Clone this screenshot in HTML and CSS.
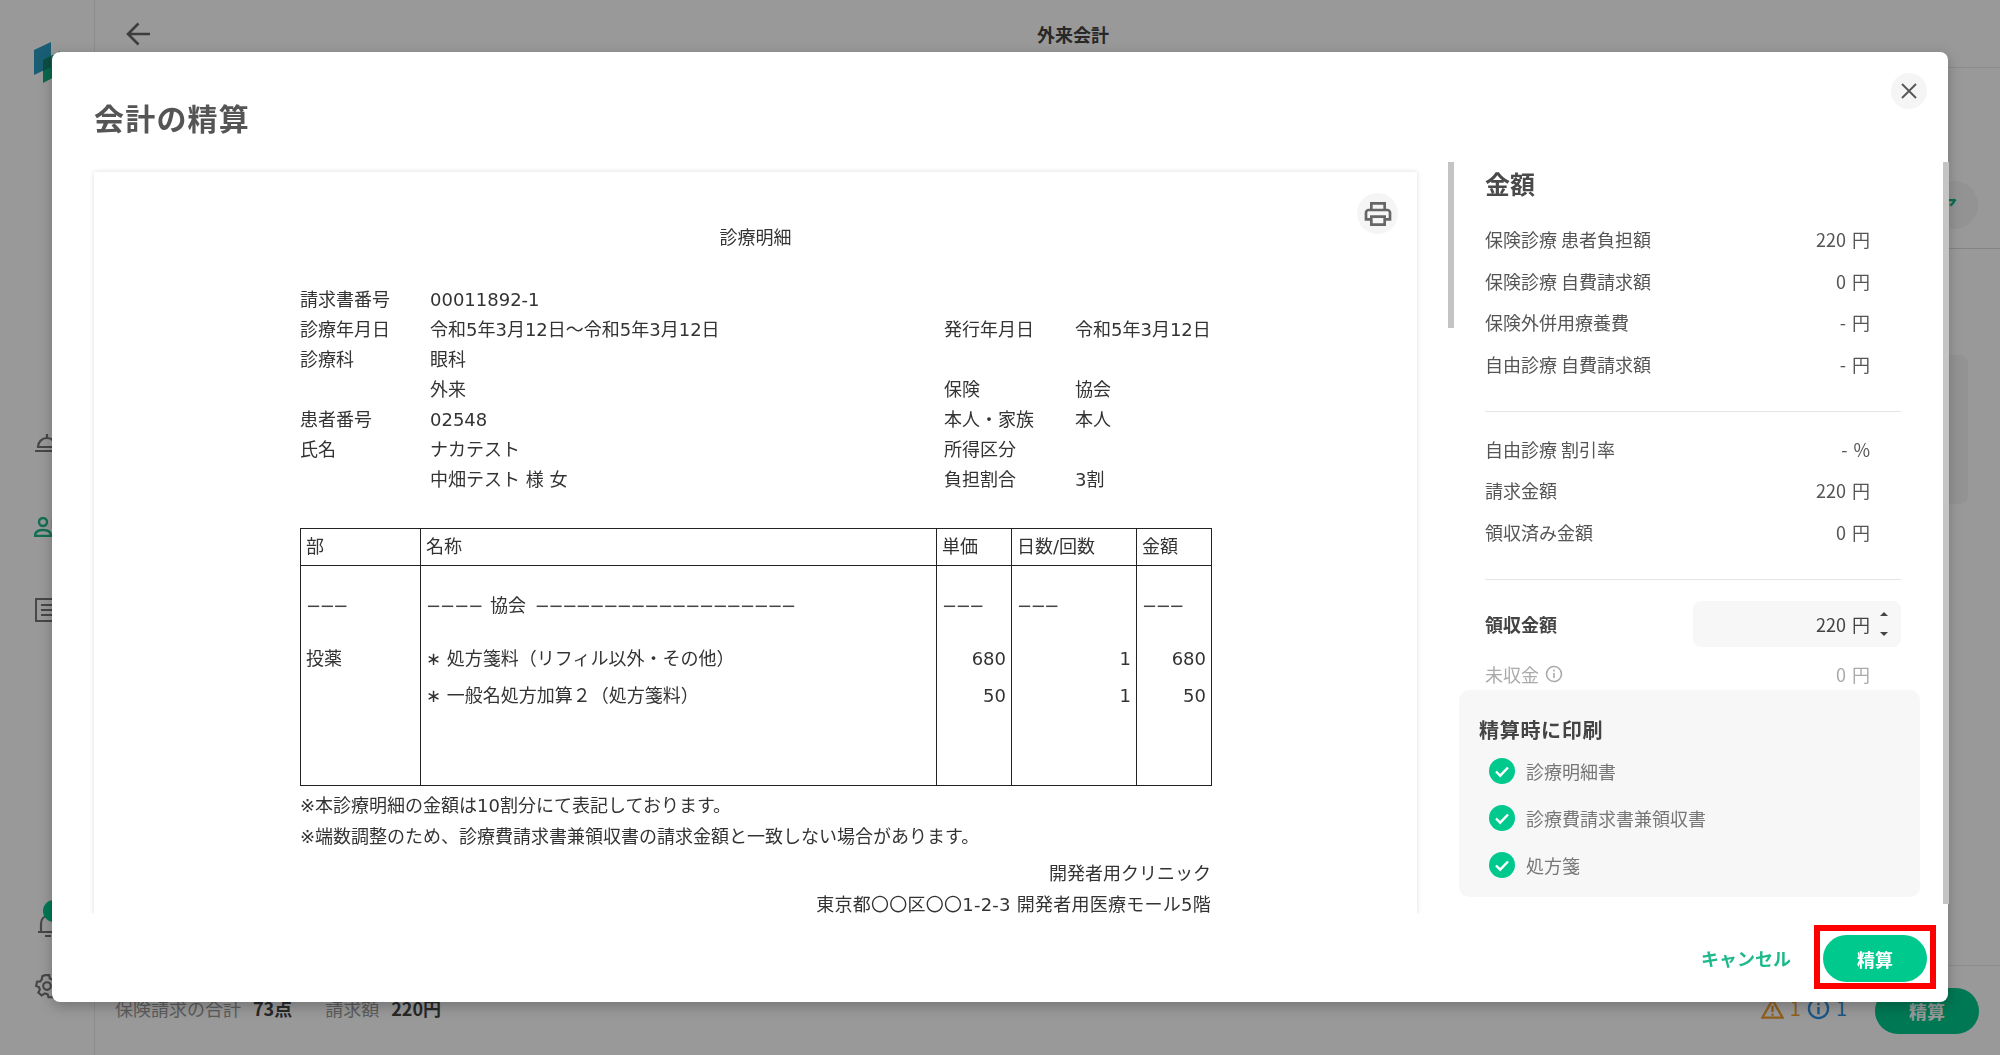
FILE: index.html
```html
<!DOCTYPE html>
<html lang="ja">
<head>
<meta charset="utf-8">
<title>会計の精算</title>
<link rel="stylesheet" href="styles.css">
</head>
<body>
<div class="app">
  <aside class="sidebar">
    <svg class="logo" viewBox="0 0 30 41"><polygon points="0,8 17,0 17,25 0,33" fill="#2a9dc4"/><polygon points="9,18 26,9 26,32 9,41" fill="#12b07f"/><polygon points="9,18 17,14 17,25 9,29" fill="#14826f"/></svg>
    <svg class="nav cloche" viewBox="0 0 26 20" fill="none" stroke="#777" stroke-width="2.2"><path d="M1 18h24M4 14c0-5 4-9 9-9s9 4 9 9zM13 1v4"/></svg>
    <svg class="nav person" viewBox="0 0 26 20" fill="none" stroke="#1fb98a" stroke-width="2.4"><circle cx="9" cy="5" r="4"/><path d="M1 19c0-5 4-6 8-6s8 1 8 6z"/><path d="M19 2v9M23 2v9"/></svg>
    <svg class="nav receipt" viewBox="0 0 26 26" fill="none" stroke="#777" stroke-width="2"><path d="M2 2h24v22H2zM7 8h19M7 13h19M7 18h19"/></svg>
    <div class="side-bottom">
      <div class="bell-wrap">
        <svg class="nav bell" viewBox="0 0 26 24" fill="none" stroke="#777" stroke-width="2.2"><path d="M1 19h20M4 19v-8c0-5 3-8 7-8s7 3 7 8v8M8 23h6"/></svg>
        <span class="bell-badge"></span>
      </div>
      <svg class="nav gear" viewBox="0 0 24 24" fill="none" stroke="#777" stroke-width="2"><circle cx="12" cy="12" r="3.5"/><path d="M10 2h4l.6 3 2.4 1 2.6-1.6 2.6 3.2-2 2.2.4 2.2 2.4 1.4-1 3.8-3 .2-1.4 2-.2 3h-4l-.8-2.8-2.4-.8L7 20.600 4 18l1.400-2.600-.8-2.400L2 12l.8-4 3-.2 1.400-2L7.600 3z"/></svg>
    </div>
  </aside>
  <main class="main">
    <header class="top">
      <svg class="back" viewBox="0 0 25 24" fill="none" stroke="#666" stroke-width="2.600"><path d="M24 12H2M12.500 1.500 2 12l10.500 10.500"/></svg>
      <h2 class="top-title">外来会計</h2>
    </header>
    <div class="subbar">
      <span class="round-tab">ア</span>
    </div>
    <div class="content">
      <div class="side-card"></div>
    </div>
    <footer class="bottom">
      <span class="sum-label">保険請求の合計</span><b class="sum-val">73点</b>
      <span class="sum-label sum-second">請求額</span><b class="sum-val">220円</b>
      <span class="alerts">
        <svg class="alert-icon" viewBox="0 0 24 22" fill="none" stroke="#f0a030" stroke-width="2.400"><path d="M12 2 1.500 20.500h21zM12 8v7M12 16.500v2"/></svg>
        <span class="warn-count">1</span>
        <svg class="alert-icon" viewBox="0 0 24 24" fill="none" stroke="#2f8fdc" stroke-width="2.400"><circle cx="12" cy="12" r="10"/><path d="M12 10.500V18M12 6v2.500"/></svg>
        <span class="info-count">1</span>
      </span>
      <button class="under-btn">精算</button>
    </footer>
  </main>
</div>
<div class="overlay"></div>
<section class="dialog">
  <div class="dlg-head">
    <h1 class="dlg-title">会計の精算</h1>
    <button class="close" aria-label="閉じる"><svg class="close-x" viewBox="0 0 16 16" fill="none" stroke="#555" stroke-width="1.800"><path d="M1 1l14 14M15 1 1 15"/></svg></button>
  </div>
  <div class="dlg-body">
    <article class="card">
      <button class="print" aria-label="印刷"><svg class="print-icon" viewBox="0 0 24 24" fill="#666"><path d="M19 8h-1V3H6v5H5c-1.660 0-3 1.340-3 3v6h4v4h12v-4h4v-6c0-1.660-1.340-3-3-3zM8 5h8v3H8V5zm8 12v2H8v-4h8v2zm2-2v-2H6v2H4v-4c0-.550.450-1 1-1h14c.550 0 1 .450 1 1v4h-2z"/></svg></button>
      <h3 class="doc-title">診療明細</h3>
      <div class="doc-grid">
        <span>請求書番号</span><span>00011892-1</span><span></span><span></span>
        <span>診療年月日</span><span>令和5年3月12日～令和5年3月12日</span><span>発行年月日</span><span>令和5年3月12日</span>
        <span>診療科</span><span>眼科</span><span></span><span></span>
        <span></span><span>外来</span><span>保険</span><span>協会</span>
        <span>患者番号</span><span>02548</span><span>本人・家族</span><span>本人</span>
        <span>氏名</span><span>ナカテスト</span><span>所得区分</span><span></span>
        <span></span><span>中畑テスト 様 女</span><span>負担割合</span><span>3割</span>
      </div>
      <table class="bill">
        <colgroup><col class="c1"><col class="c2"><col class="c3"><col class="c4"><col class="c5"></colgroup>
        <thead><tr><th>部</th><th>名称</th><th>単価</th><th>日数/回数</th><th>金額</th></tr></thead>
        <tbody>
          <tr class="gap-a"><td></td><td></td><td></td><td></td><td></td></tr>
          <tr class="line"><td class="dash">−−−</td><td><span class="dash dash-lead">−−−−</span> 協会 <span class="dash dash-tail">−−−−−−−−−−−−−−−−−−−</span></td><td class="dash">−−−</td><td class="dash">−−−</td><td class="dash">−−−</td></tr>
          <tr class="gap-b"><td></td><td></td><td></td><td></td><td></td></tr>
          <tr class="line"><td>投薬</td><td>∗ 処方箋料（リフィル以外・その他）</td><td class="num">680</td><td class="num">1</td><td class="num">680</td></tr>
          <tr class="line"><td></td><td>∗ 一般名処方加算２（処方箋料）</td><td class="num">50</td><td class="num">1</td><td class="num">50</td></tr>
          <tr class="gap-c"><td></td><td></td><td></td><td></td><td></td></tr>
        </tbody>
      </table>
      <p class="note">※本診療明細の金額は10割分にて表記しております。</p>
      <p class="note note-2">※端数調整のため、診療費請求書兼領収書の請求金額と一致しない場合があります。</p>
      <p class="clinic">開発者用クリニック</p>
      <p class="clinic clinic-2">東京都〇〇区〇〇1-2-3 開発者用医療モール5階</p>
    </article>
    <span class="thumb"></span>
    <div class="amount">
      <div class="amount-in">
        <h3 class="amount-title">金額</h3>
        <div class="row"><span>保険診療 患者負担額</span><span class="val">220 円</span></div>
        <div class="row"><span>保険診療 自費請求額</span><span class="val">0 円</span></div>
        <div class="row"><span>保険外併用療養費</span><span class="val">- 円</span></div>
        <div class="row"><span>自由診療 自費請求額</span><span class="val">- 円</span></div>
        <hr class="rule">
        <div class="row"><span>自由診療 割引率</span><span class="val">- %</span></div>
        <div class="row"><span>請求金額</span><span class="val">220 円</span></div>
        <div class="row"><span>領収済み金額</span><span class="val">0 円</span></div>
        <hr class="rule">
        <div class="pay">
          <span class="pay-label">領収金額</span>
          <div class="pay-input"><span class="pay-val">220 円</span>
            <svg class="spin" viewBox="0 0 10 24" fill="#444"><path d="M5 0 9 4H1zM1 20h8l-4 4z"/></svg>
          </div>
        </div>
        <div class="row row-muted"><span class="muted-label">未収金
          <svg class="info" viewBox="0 0 18 18" fill="none" stroke="#aaa" stroke-width="1.600"><circle cx="9" cy="9" r="7.500"/><path d="M9 8v5M9 4.500v2"/></svg></span><span class="val">0 円</span></div>
        <div class="print-panel">
          <h4 class="print-title">精算時に印刷</h4>
          <div class="check-row"><svg class="check" viewBox="0 0 26 26"><circle cx="13" cy="13" r="13" fill="#00c98d"/><path d="M7 13.500l4.200 4.200L19 9.500" fill="none" stroke="#fff" stroke-width="2.400"/></svg><span>診療明細書</span></div>
          <div class="check-row"><svg class="check" viewBox="0 0 26 26"><circle cx="13" cy="13" r="13" fill="#00c98d"/><path d="M7 13.500l4.200 4.200L19 9.500" fill="none" stroke="#fff" stroke-width="2.400"/></svg><span>診療費請求書兼領収書</span></div>
          <div class="check-row"><svg class="check" viewBox="0 0 26 26"><circle cx="13" cy="13" r="13" fill="#00c98d"/><path d="M7 13.500l4.200 4.200L19 9.500" fill="none" stroke="#fff" stroke-width="2.400"/></svg><span>処方箋</span></div>
        </div>
      </div>
      <span class="track"></span>
    </div>
  </div>
  <div class="dlg-foot">
    <button class="cancel">キャンセル</button>
    <span class="mark"><button class="settle">精算</button></span>
  </div>
</section>
</body>
</html>
```
FILE: styles.css
```css
* { box-sizing: border-box; }
html, body { margin: 0; height: 100%; }
body { font-family: "Noto Sans CJK JP", "Noto Sans", sans-serif; font-size: 18px; color: #555; background: #fff; overflow: hidden; }
h1, h2, h3, h4, p { margin: 0; }
button { font: inherit; border: 0; background: none; padding: 0; }
svg { display: block; }

.app { display: flex; height: 1055px; }
.sidebar { width: 95px; flex: none; border-right: 1px solid #ececec; padding: 42px 0 0 34px; display: flex; flex-direction: column; height: 100%; }
.logo { width: 30px; height: 41px; }
.nav { width: 26px; }
.cloche { height: 20px; margin-top: 350px; }
.person { height: 20px; margin-top: 64px; }
.receipt { height: 26px; margin-top: 60px; }
.side-bottom { margin-top: auto; padding-bottom: 56px; }
.bell-wrap { position: relative; margin-left: 3px; }
.bell { height: 24px; }
.bell-badge { position: absolute; left: 6px; top: -13px; width: 22px; height: 22px; border-radius: 50%; background: #00c98d; }
.gear { height: 26px; margin-top: 36px; }

.main { flex: 1; display: flex; flex-direction: column; min-width: 0; }
.top { height: 68px; border-bottom: 1px solid #ececec; display: flex; align-items: flex-start; padding: 21px 0 0 31px; position: relative; }
.back { width: 25px; height: 24px; margin-top: 1px; }
.top-title { font-size: 18px; font-weight: 700; color: #444; margin-left: 886px; line-height: 26px; }
.subbar { height: 181px; border-bottom: 1px solid #dcdcdc; display: flex; justify-content: flex-end; align-items: flex-start; padding: 113px 22px 0 0; }
.round-tab { width: 48px; height: 48px; border-radius: 50%; background: #f5f5f5; color: #0fb584; font-weight: 700; line-height: 48px; padding-left: 9px; }
.content { flex: 1; display: flex; justify-content: flex-end; padding: 106px 32px 0 0; }
.side-card { width: 60px; height: 149px; background: #f5f5f5; border-radius: 8px; }
.bottom { height: 90px; border-top: 1px solid #ececec; display: flex; align-items: flex-start; padding: 29px 21px 0 20px; line-height: 26px; }
.sum-label { color: #999; }
.sum-val { color: #444; margin-left: 12px; font-weight: 700; }
.sum-second { margin-left: 33px; }
.alerts { margin-left: auto; display: flex; align-items: center; gap: 6px; color: #f0a030; margin-right: 28px; height: 26px; font-size: 20px; }
.alert-icon { width: 23px; height: 23px; }
.info-count { color: #2f8fdc; }
.under-btn { width: 104px; height: 46px; border-radius: 23px; background: #00c98d; color: #fff; font-weight: 700; margin-top: -7px; }

.overlay { position: fixed; inset: 0; background: rgba(0, 0, 0, .4); }

.dialog { position: absolute; left: 52px; top: 52px; width: 1896px; height: 950px; background: #fff; border-radius: 8px; box-shadow: 0 4px 14px rgba(0, 0, 0, .25); display: flex; flex-direction: column; }
.dlg-head { height: 110px; display: flex; justify-content: space-between; align-items: flex-start; padding: 0 21px 0 42px; }
.dlg-title { font-size: 30px; font-weight: 700; letter-spacing: 1.2px; color: #555; line-height: 44px; margin-top: 43px; }
.close { width: 36px; height: 36px; margin-top: 21px; border-radius: 50%; background: #f5f5f5; display: flex; align-items: center; justify-content: center; }
.close-x { width: 16px; height: 16px; }

.dlg-body { height: 752px; display: flex; align-items: flex-start; padding-left: 42px; }
.card { width: 1323px; height: 742px; margin-top: 10px; overflow: hidden; flex: none; position: relative; padding: 0 206px; box-shadow: 0 0 5px rgba(0, 0, 0, .14); clip-path: inset(-8px -8px 0 -8px); color: #333; font-family: "DejaVu Sans", "Noto Sans CJK JP", sans-serif; line-height: 30px; }
.print { position: absolute; right: 19px; top: 21px; width: 41px; height: 41px; border-radius: 50%; background: #f5f5f5; display: flex; align-items: center; justify-content: center; }
.print-icon { width: 32px; height: 32px; }
.doc-title { font-size: 18px; font-weight: 400; text-align: center; margin-top: 51px; }
.doc-grid { display: grid; grid-template-columns: 130px 514px 131px 1fr; margin-top: 32px; grid-auto-rows: 30px; white-space: nowrap; }
.bill { width: 911px; border-collapse: collapse; table-layout: fixed; margin-top: 33px; border: 1px solid #222; }
.c1 { width: 120px; }
.c2 { width: 516px; }
.c3 { width: 75px; }
.c4 { width: 125px; }
.c5 { width: 75px; }
.bill th { height: 37px; font-weight: 400; text-align: left; padding: 0 5px; border: 1px solid #222; }
.bill td { padding: 0 5px; border-left: 1px solid #222; border-right: 1px solid #222; white-space: nowrap; }
.line td { height: 37px; }
.gap-a td { height: 22px; }
.gap-b td { height: 16px; }
.gap-c td { height: 71px; }
.num { text-align: right; }
.dash { letter-spacing: -1.4px; color: #444; }
.dash-lead { letter-spacing: -1px; margin-right: 2px; }
.dash-tail { margin-left: 3px; }
.note { margin-top: 5px; }
.note-2 { margin-top: 1px; }
.clinic { text-align: right; margin-top: 7px; }
.clinic-2 { margin-top: 1px; letter-spacing: .25px; }

.thumb { width: 6px; height: 166px; margin-left: 31px; background: #c4c4c4; flex: none; }
.amount { flex: none; width: 495px; height: 742px; display: flex; }
.amount-in { flex: 1; padding: 0 42px 0 31px; min-width: 0; }
.track { width: 6px; flex: none; background: #c4c4c4; }
.amount-title { font-size: 25px; font-weight: 700; color: #4a4a4a; height: 56.500px; line-height: 43px; }
.row { height: 41.600px; display: flex; justify-content: space-between; align-items: center; padding-right: 31px; }
.val { word-spacing: 2px; }
.rule { border: 0; border-top: 1px solid #e5e5e5; margin: 26px 0 16px; }
.rule + .pay { margin-top: 21px; }
.pay { display: flex; justify-content: space-between; align-items: center; height: 46px; }
.pay-label { font-weight: 700; color: #444; }
.pay-input { width: 208px; height: 46px; background: #f7f7f7; border-radius: 8px; display: flex; align-items: center; justify-content: flex-end; padding-right: 12px; }
.pay-val { color: #444; margin-right: 9px; word-spacing: 2px; }
.spin { width: 10px; height: 24px; }
.row-muted { height: 32px; margin-top: 11px; color: #aaa; }
.muted-label { display: flex; align-items: center; gap: 6px; }
.info { width: 18px; height: 18px; }
.print-panel { margin: 0 -19px 0 -26px; height: 207px; background: #f7f7f7; border-radius: 10px; padding: 25px 0 0 20px; }
.print-title { font-size: 20px; font-weight: 700; letter-spacing: .7px; color: #444; line-height: 30px; margin-bottom: 3px; }
.check-row { height: 47px; display: flex; align-items: center; gap: 11px; padding-left: 10px; color: #777; }
.check { width: 26px; height: 26px; }

.dlg-foot { flex: 1; display: flex; justify-content: flex-end; align-items: flex-end; gap: 23px; padding: 0 12px 13px 0; }
.cancel { color: #1db98a; font-weight: 700; height: 62px; width: 90px; }
.mark { display: block; border: 6px solid #f00; padding: 4px 3px 1px; }
.settle { display: block; width: 104px; height: 47px; border-radius: 24px; background: #00c98d; color: #fff; font-weight: 700; }
```
